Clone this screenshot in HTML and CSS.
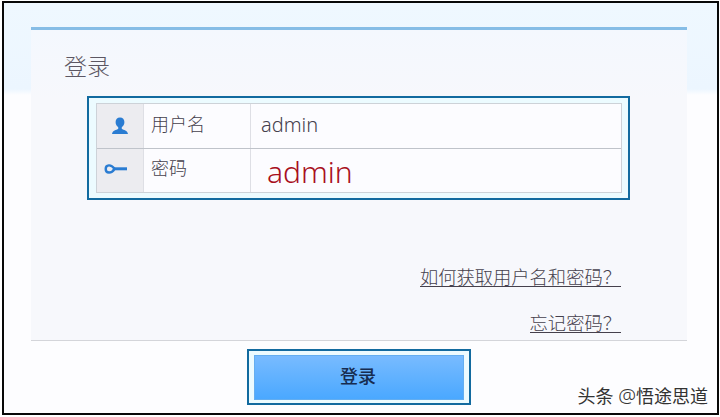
FILE: index.html
```html
<!DOCTYPE html>
<html lang="zh-CN">
<head>
    <meta charset="UTF-8">
    <meta name="viewport" content="width=device-width, initial-scale=1.0">
    <title>登录</title>
    <link rel="stylesheet" href="styles.css">
</head>
<body>
    <div class="page">
        <form class="login-form">
            <div class="panel">
                <h1>登录</h1>
                <div class="highlight fields-box">
                    <div class="fields">
                        <div class="row">
                            <div class="icon">
                                <svg width="18" height="18" viewBox="0 0 18 18">
                                    <path d="M9 .5C6.200.5 4.600 2.300 4.600 5c0 2.300 1 4.200 2.600 5v2C5.400 13 1.500 13.200 1 17h16c-.5-3.800-4.400-4-6.200-5v-2c1.600-.8 2.600-2.700 2.600-5C13.400 2.300 11.800.5 9 .5z" fill="#2a7cd2"/>
                                </svg>
                            </div>
                            <div class="label">用户名</div>
                            <div class="value">admin</div>
                        </div>
                        <div class="row">
                            <div class="icon key">
                                <svg width="24" height="12" viewBox="0 0 24 12">
                                    <path d="M9 5.800h14" stroke="#2a7cd2" stroke-width="3" fill="none"/>
                                    <path d="M1.700 6C1.700 1.500 7 .9 10.500 5.800 7.500 11 1.700 10.500 1.700 6z" stroke="#2a7cd2" stroke-width="2.400" fill="none"/>
                                </svg>
                            </div>
                            <div class="label">密码</div>
                            <div class="value password">admin</div>
                        </div>
                    </div>
                </div>
                <div class="links">
                    <a href="#">如何获取用户名和密码？</a>
                    <a href="#">忘记密码？</a>
                </div>
            </div>
            <div class="highlight button-box">
                <button type="button">登录</button>
            </div>
        </form>
        <div class="watermark">头条 <span class="at">@</span>悟途思道</div>
    </div>
</body>
</html>
```

FILE: styles.css
```css
* {
    box-sizing: border-box;
}

body {
    margin: 0;
    padding: 1px 1px 1px 2px;
    background-color: #fff;
    font-family: "Noto Sans", "Noto Sans CJK SC", sans-serif;
    font-weight: 300;
    color: #45404c;
}

.page {
    position: relative;
    width: 717px;
    height: 414px;
    border: 2px solid #080808;
    background: linear-gradient(#eff8ff, #ecf6ff 86px, #fdfdff 92px, #fdfdff);
}

.login-form {
    padding: 24px 28px 0 27px;
}

.panel {
    width: 656px;
    height: 314px;
    padding: 21px 0 0 33px;
    border-top: 3px solid #86bde6;
    border-bottom: 1px solid #d4d5da;
    background: linear-gradient(#f4f8fe, #f7f8fc 70px);
}

h1 {
    margin: 0;
    height: 45px;
    font-size: 23px;
    line-height: 30px;
    font-weight: 300;
    color: #5c5763;
}

.highlight {
    border: 2px solid #126a9f;
    background-color: #ecfbff;
}

.fields-box {
    width: 543px;
    height: 104px;
    margin-left: 23px;
    padding: 5px 6px 5px 7px;
}

.fields {
    width: 526px;
    border: 1px solid #cdd2d8;
    background-color: #fcfcff;
}

.row {
    display: flex;
    height: 44px;
}

.row + .row {
    border-top: 1px solid #bfc3ca;
}

.icon {
    display: flex;
    align-items: center;
    justify-content: center;
    width: 47px;
    background-color: #ececf0;
    border-right: 1px solid #dedfe5;
}

.key {
    padding: 0 8px 4px 0;
}

.label {
    width: 107px;
    padding-left: 7px;
    border-right: 1px solid #dedfe5;
    font-size: 18px;
    line-height: 41px;
}

.row + .row .label {
    line-height: 39px;
}

.value {
    padding-left: 10px;
    font-size: 20px;
    line-height: 41px;
}

.password {
    padding-left: 16px;
    font-size: 30px;
    line-height: 45px;
    color: #a80f20;
}

.links {
    display: flex;
    flex-direction: column;
    align-items: flex-end;
    gap: 24px;
    padding: 65px 66px 0 0;
}

.links a {
    height: 22px;
    border-bottom: 1px solid #45404c;
    color: #45404c;
    font-size: 18.300px;
    line-height: 23px;
    text-decoration: none;
}

.button-box {
    width: 224px;
    height: 56px;
    margin: 8px 0 0 216px;
    padding: 4px 5px;
}

button {
    display: block;
    width: 210px;
    height: 45px;
    padding: 0 2px 5px 0;
    border: 1px solid #64aef0;
    background: linear-gradient(#78bbff, #4aa8ff);
    font-family: inherit;
    font-size: 18px;
    font-weight: 500;
    color: #172c50;
}

.watermark {
    position: absolute;
    right: 9px;
    bottom: 5px;
    font-size: 18px;
    line-height: 24px;
    font-weight: 400;
    color: #333;
    text-shadow: -1px -1px 0 #fff;
}

.at {
    font-size: 20px;
    font-weight: 300;
}
```
